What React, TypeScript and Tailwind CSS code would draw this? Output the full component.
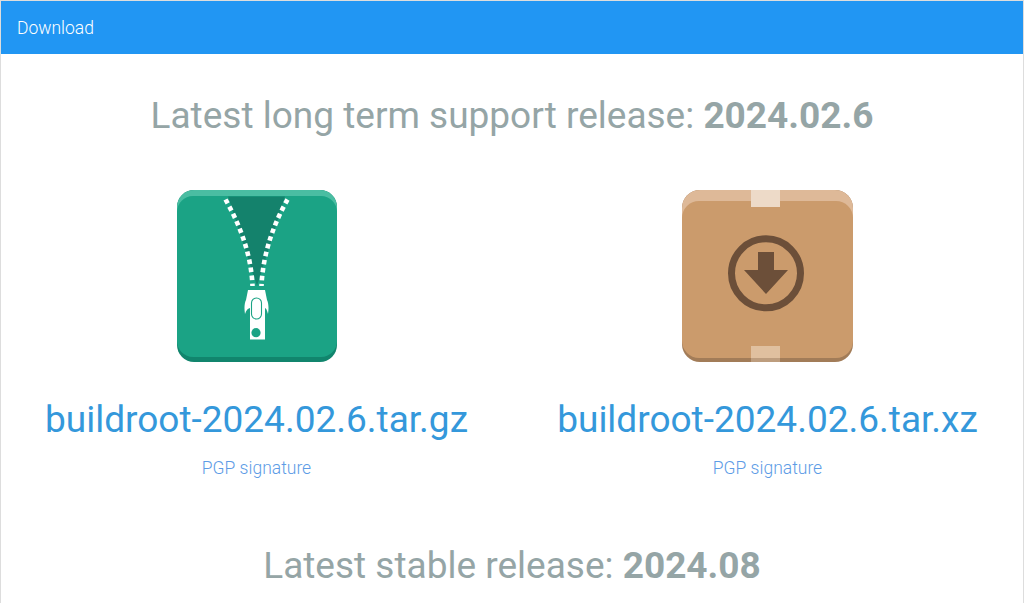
const releases = [
  { file: 'buildroot-2024.02.6.tar.gz', icon: 'zip' },
  { file: 'buildroot-2024.02.6.tar.xz', icon: 'box' },
]

function ZipIcon() {
  return (
    <svg width="160" height="172" viewBox="0 0 160 172">
      <rect x="0" y="0" width="160" height="172" rx="17" fill="#11856d" />
      <path d="M0 17a17 17 0 0 1 17-17h126a17 17 0 0 1 17 17v120H0z" fill="#4abda2" />
      <rect x="0" y="6" width="160" height="161" rx="16" fill="#1ba385" />
      <path d="M51 6.500H108L80 96z" fill="#14826c" />
      <path d="M48.500 9.500C60 30 74 60 75.500 96" fill="none" stroke="#fff" strokeWidth="4.600" strokeDasharray="4.600 3.500" />
      <path d="M110.500 9.500C99 30 86 60 84.500 96" fill="none" stroke="#fff" strokeWidth="4.600" strokeDasharray="4.600 3.500" />
      <path d="M71 100H88L90 110C91.500 113 92 118 91 124C90 120 89 118 88 118V149.500H73V118C71.500 118 69 120 68 124C67 118 67.500 113 69 110z" fill="#fff" />
      <rect x="74.500" y="108" width="10" height="21" rx="5" fill="#fff" stroke="#1ba385" strokeWidth="1.100" />
      <circle cx="79" cy="142.700" r="4.600" fill="#1ba385" />
    </svg>
  )
}

function BoxIcon() {
  return (
    <svg width="171" height="172" viewBox="0 0 171 172">
      <rect x="0" y="0" width="171" height="172" rx="18" fill="#a27c58" />
      <path d="M0 18a18 18 0 0 1 18-18h135a18 18 0 0 1 18 18v120H0z" fill="#deb998" />
      <rect x="0" y="11" width="171" height="157" rx="17" fill="#cb9b6c" />
      <rect x="69" y="0" width="29" height="17" fill="#eddac8" />
      <rect x="69" y="156" width="29" height="12" fill="#e0c09f" />
      <rect x="69" y="168" width="29" height="4" fill="#bd9d7e" />
      <circle cx="84" cy="83.300" r="34.500" fill="none" stroke="#6c4f39" strokeWidth="7" />
      <path d="M76 62H92V80H106L84 104L62 80H76z" fill="#6c4f39" />
    </svg>
  )
}

export default function App() {
  return (
    <div className="h-[603px] overflow-hidden bg-white font-['Roboto',sans-serif]">
      <div className="border border-[#dddddd]">
        <div className="flex h-[53px] items-center bg-[#2196f3] px-4 pt-px text-[17.500px] font-light text-white">Download</div>
        <div className="flex flex-col items-center pb-10">
          <h2 className="mt-[40px] text-[37px] leading-[44px] font-normal text-[#95a5a6]">
            Latest long term support release: <b className="font-bold">2024.02.6</b>
          </h2>
          <div className="mt-[52px] grid w-full grid-cols-2">
            {releases.map((r) => (
              <div key={r.file} className="flex flex-col items-center">
                {r.icon === 'zip' ? <ZipIcon /> : <BoxIcon />}
                <a href="#" className="mt-[36px] text-[37px] leading-[44px] font-normal text-[#3498db]">{r.file}</a>
                <a href="#" className="mt-[15px] text-[17.500px] leading-[22px] font-light text-[#5d9ce6]">PGP signature</a>
              </div>
            ))}
          </div>
          <h2 className="mt-[65px] text-[37px] leading-[44px] font-normal text-[#95a5a6]">
            Latest stable release: <b className="font-bold">2024.08</b>
          </h2>
        </div>
      </div>
    </div>
  )
}
